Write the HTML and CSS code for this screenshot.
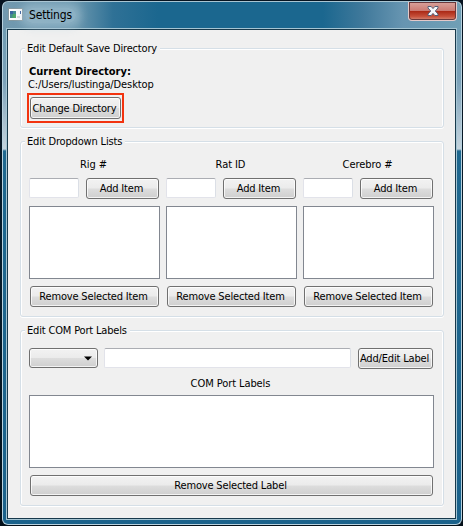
FILE: index.html
```
<!DOCTYPE html>
<html lang="en">
<head>
<meta charset="utf-8">
<title>Settings</title>
<link rel="stylesheet" href="styles.css">
</head>
<body>
<div class="window">
  <header class="titlebar">
    <svg class="app-icon" width="15" height="13" viewBox="0 0 15 13">
      <rect width="15" height="13" fill="#84979f"/>
      <rect x="1" y="1" width="13" height="11" fill="#fff"/>
      <rect x="2" y="3" width="6" height="7" fill="#438b91"/>
      <path d="M2 3h3v3H2z" fill="#3a66a0"/>
      <path d="M5 6h3v4H4z" fill="#4aa66b"/>
      <path d="M9 8h3v2H9z" fill="#d3d9dc"/>
      <path d="M12 3h1v3h-1z" fill="#315497"/>
    </svg>
    <span class="title">Settings</span>
    <button class="close" aria-label="Close">
      <svg width="12" height="10" viewBox="0 0 12 10">
        <path d="M1 .5h3.200L6 2.600 7.800 .5H11V2L8.300 5 11 8v1.500H7.800L6 7.400 4.200 9.500H1V8l2.700-3L1 2z" fill="#f5f7fa" stroke="#535d75"/>
      </svg>
    </button>
  </header>
  <main class="client">
    <section class="group directory">
      <h2><span>Edit Default Save Directory</span></h2>
      <strong>Current Directory:</strong>
      <p class="path">C:/Users/lustinga/Desktop</p>
      <div class="highlight"><button class="btn">Change Directory</button></div>
    </section>
    <section class="group dropdowns">
      <h2><span>Edit Dropdown Lists</span></h2>
      <div class="columns">
        <div class="column">
          <label>Rig #</label>
          <div class="entry"><input type="text"><button class="btn">Add Item</button></div>
          <div class="list"></div>
          <button class="btn remove">Remove Selected Item</button>
        </div>
        <div class="column">
          <label>Rat ID</label>
          <div class="entry"><input type="text"><button class="btn">Add Item</button></div>
          <div class="list"></div>
          <button class="btn remove">Remove Selected Item</button>
        </div>
        <div class="column">
          <label>Cerebro #</label>
          <div class="entry"><input type="text"><button class="btn">Add Item</button></div>
          <div class="list"></div>
          <button class="btn remove">Remove Selected Item</button>
        </div>
      </div>
    </section>
    <section class="group ports">
      <h2><span>Edit COM Port Labels</span></h2>
      <div class="port-entry">
        <button class="btn combo" aria-label="COM port"><svg width="8" height="5" viewBox="0 0 8 5"><path d="M0 .5h8L4 4.500z" fill="#000"/></svg></button>
        <input type="text">
        <button class="btn edit">Add/Edit Label</button>
      </div>
      <label>COM Port Labels</label>
      <div class="list"></div>
      <button class="btn remove">Remove Selected Label</button>
    </section>
  </main>
</div>
</body>
</html>
```
FILE: styles.css
```
* { box-sizing: border-box; }
body {
  margin: 0;
  padding: 1px 1px 1px 2px;
  height: 526px;
  overflow: hidden;
  background: linear-gradient(#071421, #071c2b 50%, #041019);
  font: 11px/13px "DejaVu Sans Condensed", "DejaVu Sans", sans-serif;
  font-stretch: condensed;
  letter-spacing: -.17px;
  color: #000;
}
h2, p { margin: 0; font: inherit; }
button, input { font: inherit; color: inherit; letter-spacing: inherit; margin: 0; padding: 0; }
.window {
  height: 524px;
  padding: 0 5px 5px 4px;
  border: 1px solid #b9d2df;
  border-top-color: #a9c5d2;
  border-radius: 6px;
  background:
    linear-gradient(90deg, #7299af 0, #6795ad 75px, #2f7196 110px, #1b678f 155px, #1b678f 320px, #40799b 360px, #6795b1 400px, #709fb5 100%) 0 0 / 100% 28px no-repeat,
    linear-gradient(#709cb2 28px, #7ca2b9 80px, #a9c0cf 120px, #c3d3dd 147px, #1f688f 149px, #1b628b 100%);
}
.titlebar {
  display: flex;
  align-items: flex-start;
  height: 27px;
  padding-left: 1px;
}
.app-icon { margin-top: 6px; }
.title {
  margin: 6px auto 0 2px;
  padding: 0 4px;
  font-size: 12px;
  line-height: 15px;
  border-radius: 8px;
  background: rgba(185, 211, 223, .45);
  box-shadow: 0 0 8px 5px rgba(185, 211, 223, .45);
}
.close {
  width: 49px;
  height: 19px;
  margin-right: -1px;
  border: 1px solid #e4c9c9;
  border-top: 0;
  border-radius: 0 0 4px 4px;
  background: linear-gradient(#d9a39d, #cb7b73 48%, #ab2a17 52%, #c6503a 80%, #d58d7c);
  box-shadow: inset 0 0 0 1px #69393c;
  display: grid;
  place-items: center;
}
.client {
  height: 490px;
  padding: 11px 11px 0 12px;
  border: 1px solid #18394b;
  box-shadow: 0 0 0 1px #a5c5d3;
  background: #f0f0f0;
}
.group {
  width: 424px;
  padding: 0 9px 0 8px;
  border: 1px solid #d5dfe7;
  border-radius: 3px;
  box-shadow: inset 1px 1px #fff, inset -1px 0 #fff, 0 1px #fff;
}
.group h2 { height: 13px; margin: -7px 0 0 -4px; }
.group h2 span { display: inline-block; padding: 0 3px 0 2px; background: #f0f0f0; }
.directory { height: 80px; margin-top: 7px; }
.directory strong { display: block; margin-top: 10px; height: 13px; letter-spacing: 0; }
.path { height: 13px; margin-left: -1px; letter-spacing: -.1px; }
.highlight { width: 97px; height: 30px; margin: 2px 0 0 -2px; padding: 2px 1px; border: 2px solid #f2330f; }
.highlight .btn { width: 91px; height: 22px; }
.dropdowns { height: 176px; margin-top: 13px; }
.ports { height: 176px; margin-top: 13px; }
.columns { display: grid; grid-template-columns: repeat(3, 131px); gap: 6px; margin-top: 10px; }
.column { display: flex; flex-direction: column; }
label { display: block; text-align: center; height: 20px; padding-right: 2px; letter-spacing: -.08px; }
.entry { display: flex; justify-content: space-between; padding-right: 1px; height: 28px; }
.entry input { width: 50px; }
.entry .btn { width: 73px; }
input {
  height: 20px;
  border: 1px solid #e2e3ea;
  border-top-color: #abadb3;
  border-right-color: #dbdfe6;
  border-radius: 2px;
  background: #fff;
}
.list { height: 73px; border: 1px solid #828790; background: #fff; }
.btn {
  height: 21px;
  padding-right: 2px;
  border: 1px solid #707070;
  border-radius: 3px;
  background: linear-gradient(#f2f2f2, #ebebeb 49%, #dddddd 51%, #cfcfcf);
  box-shadow: inset 0 0 0 1px rgba(255, 255, 255, .75);
  white-space: nowrap;
  text-align: center;
}
.remove { display: block; margin: 7px 1px 0; }
.port-entry { display: flex; margin-top: 11px; height: 29px; }
.port-entry input { width: 247px; margin: 0 7px 0 6px; }
.combo { width: 69px; height: 20px; display: flex; align-items: center; justify-content: flex-end; padding-right: 5px; }
.edit { width: 75px; }
.ports label { height: 18px; }
.ports .remove { width: 403px; }
```
